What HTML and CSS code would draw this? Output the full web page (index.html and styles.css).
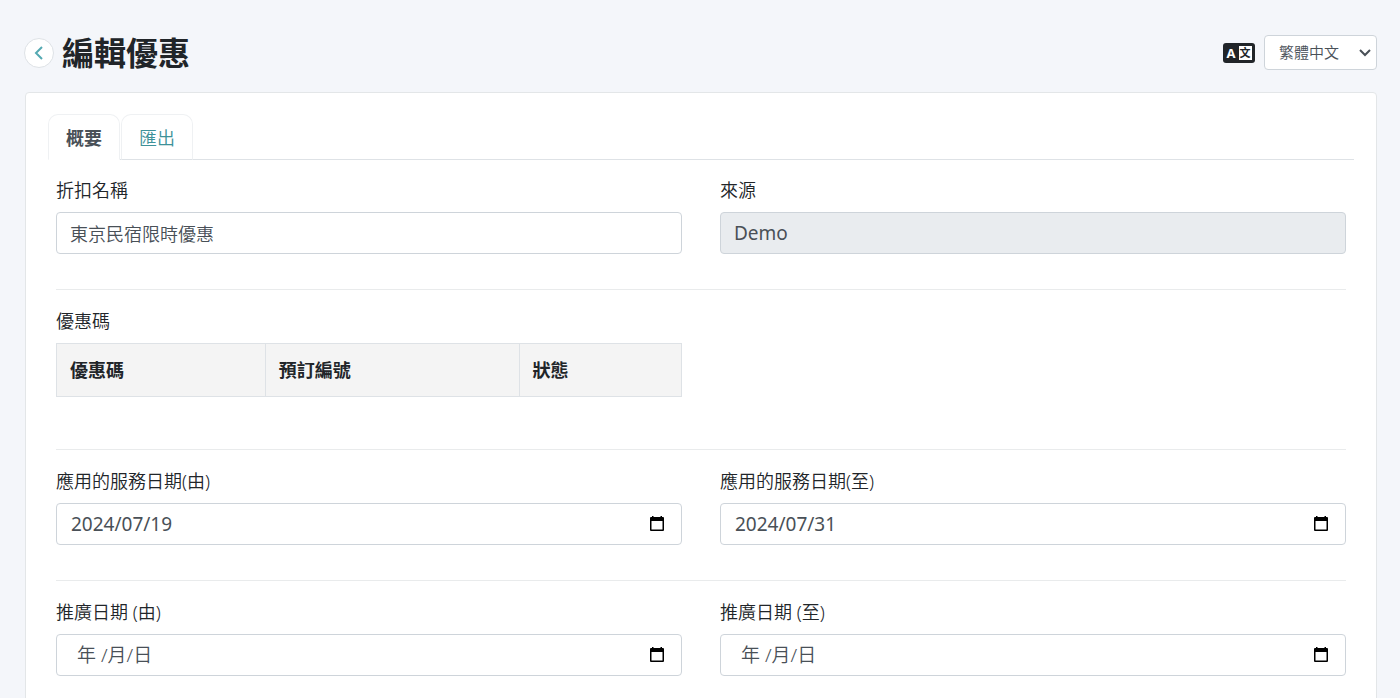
FILE: index.html
```html
<!DOCTYPE html>
<html lang="zh-Hant">
<head>
<meta charset="utf-8">
<meta name="viewport" content="width=device-width, initial-scale=1">
<title>編輯優惠</title>
<link rel="stylesheet" href="styles.css">
</head>
<body>
<header class="page-header">
  <button class="back" type="button" aria-label="返回">
    <svg width="10" height="14" viewBox="0 0 10 14"><path d="M8 1 2 7l6 6"/></svg>
  </button>
  <h1 class="page-title">編輯優惠</h1>
  <label class="language-icon" for="language" aria-label="語言">
    <svg width="32" height="20" viewBox="0 0 32 20">
      <rect class="icon-dark" width="32" height="20" rx="3"/>
      <rect class="icon-light" x="16" y="3" width="13" height="14"/>
      <text class="icon-latin" x="8" y="15">A</text>
      <text class="icon-cjk" x="22" y="14">文</text>
    </svg>
  </label>
  <span class="language">
    <select class="language-select" id="language"><option>繁體中文</option></select>
    <svg class="chevron" width="12" height="8" viewBox="0 0 12 8"><path d="m1 1 5 5 5-5"/></svg>
  </span>
</header>

<main class="card">
  <nav class="tabs">
    <a class="tab tab-active" href="#summary" aria-current="page">概要</a>
    <a class="tab" href="#export">匯出</a>
  </nav>
  <form class="form" id="summary">
    <section class="row">
      <div class="field">
        <label class="label" for="name">折扣名稱</label>
        <div class="control"><input class="input" id="name" type="text" value="東京民宿限時優惠"></div>
      </div>
      <div class="field">
        <label class="label" for="source">來源</label>
        <div class="control control-disabled"><input class="input input-latin" id="source" type="text" value="Demo" disabled></div>
      </div>
    </section>

    <section class="row row-codes">
      <div class="field">
        <span class="label" id="codes">優惠碼</span>
        <table class="table" aria-labelledby="codes">
          <thead>
            <tr><th class="col-code">優惠碼</th><th class="col-booking">預訂編號</th><th>狀態</th></tr>
          </thead>
        </table>
      </div>
    </section>

    <section class="row">
      <div class="field">
        <label class="label" for="service-from">應用的服務日期(由)</label>
        <div class="control control-date">
          <input class="input input-latin" id="service-from" type="text" value="2024/07/19">
          <button class="calendar" type="button" aria-label="選擇日期"><svg width="16" height="16" viewBox="0 0 16 16"><path d="M3 0h1.500v1h7V0H13v1h1q1 0 1 1v12q0 1-1 1H2q-1 0-1-1V2q0-1 1-1h1zM2.500 5v8.500h11V5z"/></svg></button>
        </div>
      </div>
      <div class="field">
        <label class="label" for="service-to">應用的服務日期(至)</label>
        <div class="control control-date">
          <input class="input input-latin" id="service-to" type="text" value="2024/07/31">
          <button class="calendar" type="button" aria-label="選擇日期"><svg width="16" height="16" viewBox="0 0 16 16"><path d="M3 0h1.500v1h7V0H13v1h1q1 0 1 1v12q0 1-1 1H2q-1 0-1-1V2q0-1 1-1h1zM2.500 5v8.500h11V5z"/></svg></button>
        </div>
      </div>
    </section>

    <section class="row">
      <div class="field">
        <label class="label" for="promo-from">推廣日期 (由)</label>
        <div class="control control-date control-empty">
          <input class="input input-latin" id="promo-from" type="text" placeholder="年 /月/日">
          <button class="calendar" type="button" aria-label="選擇日期"><svg width="16" height="16" viewBox="0 0 16 16"><path d="M3 0h1.500v1h7V0H13v1h1q1 0 1 1v12q0 1-1 1H2q-1 0-1-1V2q0-1 1-1h1zM2.500 5v8.500h11V5z"/></svg></button>
        </div>
      </div>
      <div class="field">
        <label class="label" for="promo-to">推廣日期 (至)</label>
        <div class="control control-date control-empty">
          <input class="input input-latin" id="promo-to" type="text" placeholder="年 /月/日">
          <button class="calendar" type="button" aria-label="選擇日期"><svg width="16" height="16" viewBox="0 0 16 16"><path d="M3 0h1.500v1h7V0H13v1h1q1 0 1 1v12q0 1-1 1H2q-1 0-1-1V2q0-1 1-1h1zM2.500 5v8.500h11V5z"/></svg></button>
        </div>
      </div>
    </section>
  </form>
</main>
</body>
</html>
```

FILE: styles.css
```css
* {
  box-sizing: border-box;
}

body {
  margin: 0;
  padding: 35px 23px 0 25px;
  background: #f4f6fa;
  color: #212529;
  font: 350 18px/26px "Noto Sans", "Noto Sans CJK TC", sans-serif;
}

.page-header {
  display: flex;
  align-items: center;
  height: 35px;
  margin-bottom: 22px;
}

.back {
  display: flex;
  align-items: center;
  justify-content: center;
  width: 30px;
  height: 30px;
  margin: 0 8px 0 -1px;
  padding: 0;
  border: 1px solid #dee2e6;
  border-radius: 50%;
  background: #fff;
}

.back path {
  fill: none;
  stroke: #54a9b2;
  stroke-width: 2;
}

.page-title {
  flex: 1;
  margin: 0;
  font-size: 32px;
  font-weight: 700;
  line-height: 40px;
}

.language-icon {
  display: flex;
  margin-right: 9px;
}

.icon-dark,
.icon-cjk {
  fill: #212529;
}

.icon-light,
.icon-latin {
  fill: #fff;
}

.icon-latin,
.icon-cjk {
  font-weight: 700;
  font-size: 13px;
  text-anchor: middle;
}

.icon-cjk {
  font-size: 11px;
}

.language {
  display: grid;
  align-items: center;
}

.language-select {
  grid-area: 1 / 1;
  appearance: none;
  width: 113px;
  height: 35px;
  padding: 0 30px 1px 14px;
  border: 1px solid #ced4da;
  border-radius: 4px;
  background: #fff;
  color: #495057;
  font: inherit;
  font-size: 15px;
}

.chevron {
  grid-area: 1 / 1;
  justify-self: end;
  margin-right: 6px;
  pointer-events: none;
}

.chevron path {
  fill: none;
  stroke: #495057;
  stroke-width: 2;
}

.card {
  padding: 21px 22px 22px;
  border: 1px solid #e3e6e8;
  border-radius: 4px;
  background: #fff;
}

.tabs {
  display: flex;
  gap: 1px;
  border-bottom: 1px solid #dee2e6;
}

.tab {
  width: 72px;
  height: 46px;
  margin-bottom: -1px;
  border: 1px solid #eff1f3;
  border-bottom-color: #dee2e6;
  border-radius: 10px 10px 0 0;
  color: #3d9199;
  line-height: 46px;
  text-align: center;
  text-decoration: none;
}

.tab-active {
  border-bottom-color: #fff;
  background: #fff;
  color: #495057;
  font-weight: 700;
}

.form {
  padding: 0 8px;
}

.row {
  display: grid;
  grid-template-columns: 1fr 1fr;
  gap: 38px;
  padding: 18px 0 35px;
}

.row:first-child {
  padding-top: 17px;
}

.row + .row {
  border-top: 1px solid #e9ebec;
}

.row-codes {
  padding-bottom: 52px;
}

.label {
  display: block;
  margin-bottom: 9px;
}

.control {
  display: flex;
  align-items: center;
  height: 42px;
  padding: 0 13px;
  border: 1px solid #ced4da;
  border-radius: 4px;
  background: #fff;
}

.control-disabled {
  background: #e9ecef;
}

.control-date {
  padding: 0 16px 0 14px;
}

.control-empty {
  padding-left: 20px;
}

.input {
  flex: 1;
  min-width: 0;
  height: 100%;
  padding: 0;
  border: 0;
  outline: 0;
  background: transparent;
  color: #495057;
  font: inherit;
}

.input-latin {
  font-size: 19px;
  font-weight: 400;
}

.input::placeholder {
  color: #495057;
  font-weight: 350;
}

.calendar {
  display: flex;
  padding: 0;
  border: 0;
  background: none;
}

.table {
  width: 100%;
  border-collapse: collapse;
  table-layout: fixed;
  background: #f4f4f4;
}

.table th {
  height: 53px;
  padding: 0 13px;
  border: 1px solid #dee2e6;
  text-align: left;
  font-weight: 700;
}

.col-code {
  width: 33.4%;
}

.col-booking {
  width: 40.6%;
}
```
